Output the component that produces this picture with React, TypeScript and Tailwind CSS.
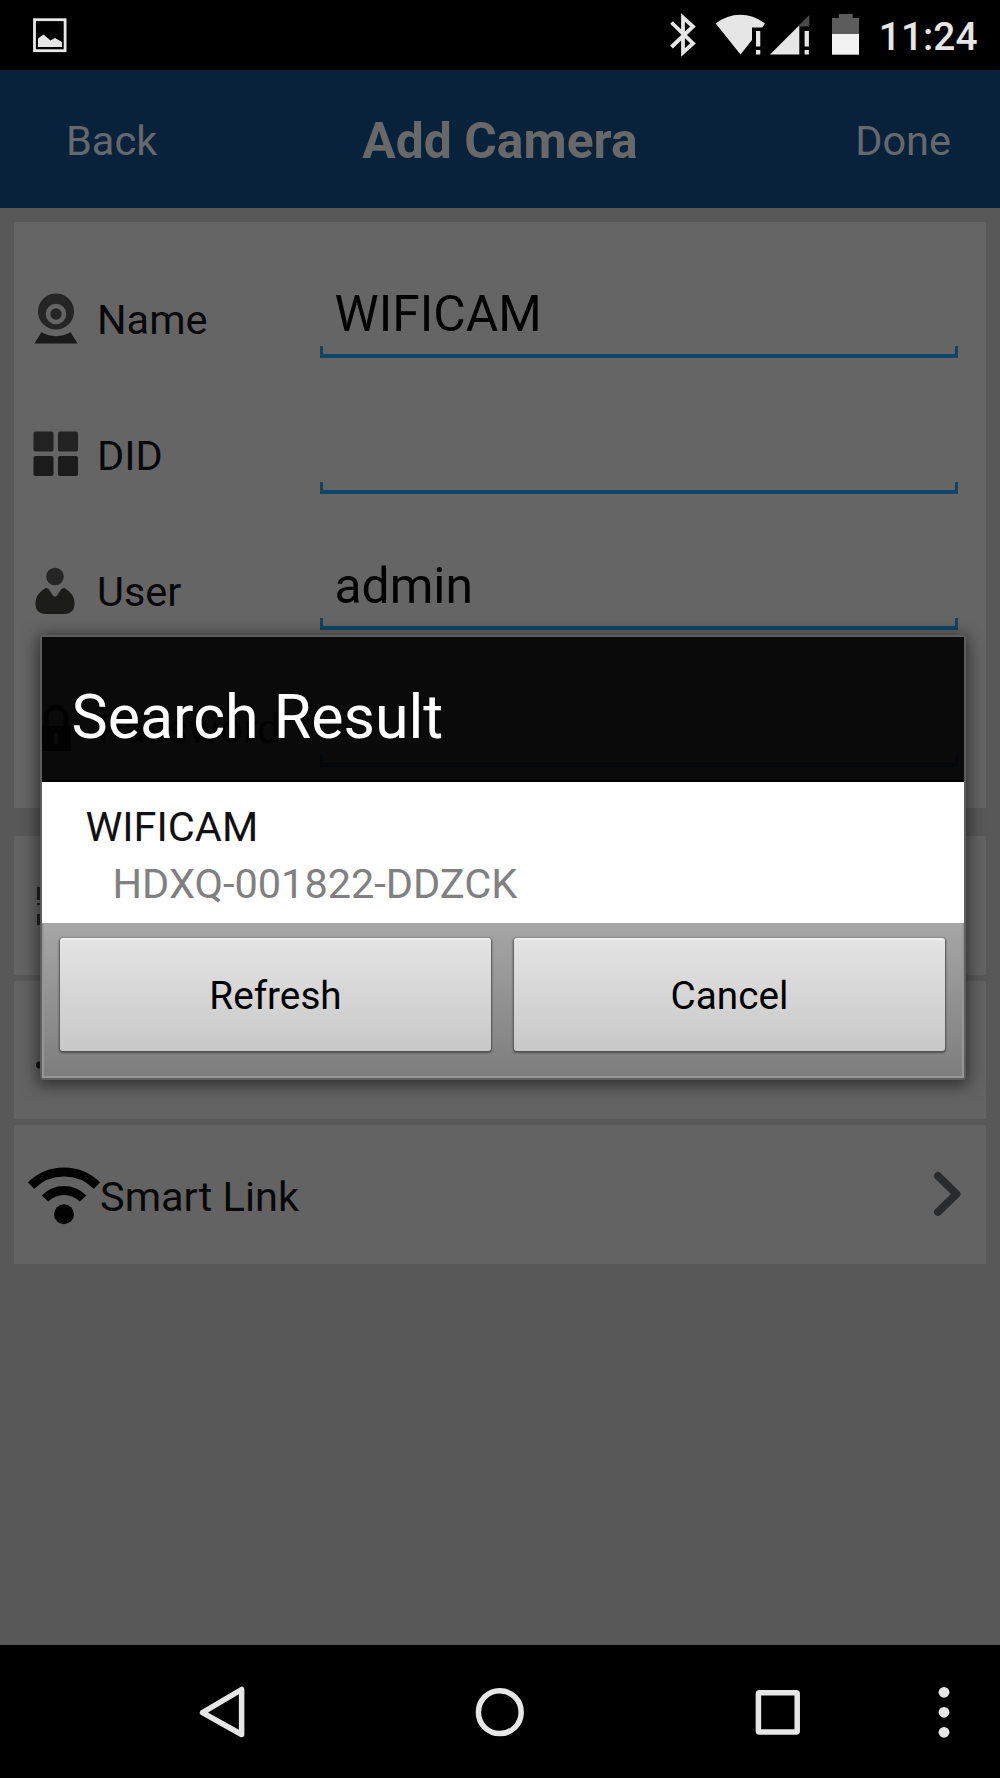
import type { ReactNode } from "react";

function StatusBar() {
  return (
    <div className="flex h-[69.500px] items-start justify-between bg-black">
      <svg className="mt-[18px] ml-[33px]" width="34" height="35" viewBox="0 0 34 35">
        <rect x="1.5" y="1.7" width="30.6" height="31" fill="none" stroke="#e8e8e8" strokeWidth="2.8" />
        <path d="M5 29V20.5L10.5 16.5L17.5 22.5L22 20L29 24V29Z" fill="#e6e6e6" />
      </svg>
      <div className="flex">
        <svg width="190" height="69" viewBox="669 0 190 69" fill="#e6e6e6">
          <path d="M671.5 22.5L693 43.5L683 52.5V17.5L693 26.5L671.5 47" fill="none" stroke="#e6e6e6" strokeWidth="3.8" />
          <path d="M715.7 23.5Q727 14.8 740.3 14.8T765 23.5L762.3 27.5H752V40L740.5 54.5Z" />
          <path d="M756 31h4.3v15.5h-4.3zM756 50h4.3v4.5h-4.3zM804.6 31h4.3v15.5h-4.3zM804.6 50h4.3v4.5h-4.3z" />
          <path d="M770 54.5L799.3 25.3V54.5Z" />
          <path d="M809.3 15V26.5H799V25.3Z" fill="#4a4a4a" />
          <path d="M832 34V18H839V14H852.7V18H859V34Z" fill="#5c5c5c" />
          <path d="M832 34H859V54.7H832Z" fill="#f2f2f2" />
        </svg>
        <div className="mr-[22.500px] ml-[20px] h-[73px] text-[38.900px] leading-[73px] font-medium text-[#e6e6e6]">11:24</div>
      </div>
    </div>
  );
}

function CameraIcon() {
  return (
    <svg width="46" height="52" viewBox="0 0 46 52">
      <circle cx="23" cy="18.500" r="18" fill="#252525" />
      <circle cx="23" cy="21" r="8" fill="#252525" stroke="#646464" strokeWidth="4.6" />
      <path d="M8.500 39.300Q23 47 37.500 39.300L44.500 50.500H1.500Z" fill="#191919" />
    </svg>
  );
}

function GridIcon() {
  return (
    <svg className="mb-[2px]" width="46" height="46" viewBox="0 0 46 46" fill="#1b1b1b">
      <rect x="0.500" y="0.500" width="20" height="20" rx="2" fill="#222" />
      <rect x="25" y="0.500" width="20" height="20" rx="2" fill="#222" />
      <rect x="0.500" y="25" width="20" height="20" rx="2" />
      <rect x="25" y="25" width="20" height="20" rx="2" />
    </svg>
  );
}

function UserIcon() {
  return (
    <svg className="mb-px" width="46" height="48" viewBox="0 0 46 48">
      <circle cx="22" cy="9.500" r="8.800" fill="#252525" />
      <path d="M12.500 21Q14.500 20.500 16 22.500L19.500 28Q22 31.500 24.500 28L28 22.500Q29.500 20.500 31.500 21Q41.500 27 41.500 36Q42 46.500 31 47H13Q2 46.500 2.500 36Q2.500 27 12.500 21Z" fill="#1c1c1b" />
    </svg>
  );
}

function LockIcon() {
  return (
    <svg width="46" height="48" viewBox="0 0 46 48">
      <path d="M13 23V13a10 10 0 0 1 20 0V23" fill="none" stroke="#1c1c1c" strokeWidth="5" />
      <path d="M8 22H38V47H8ZM21 29V40H25V29Z" fill="#1c1c1c" fillRule="evenodd" />
    </svg>
  );
}

function Field({ icon, label, value }: { icon: ReactNode; label: string; value?: string }) {
  return (
    <div className="flex h-[136.200px]">
      <div className="flex w-[83px] items-center pl-[19px]">{icon}</div>
      <div className="flex w-[222.500px] items-center pt-[2px] text-[41.500px] text-[#080808]">{label}</div>
      <div className="flex w-[638.500px] flex-col">
        <div className="h-[95px] pt-[27px] pl-[15px] text-[49.800px] leading-[73px] text-[#020202]">{value}</div>
        <div className="h-[12px] border-x-[3px] border-b-[4px] border-[#0f4567]" />
      </div>
    </div>
  );
}

function DialogButton({ children }: { children: ReactNode }) {
  return (
    <button className="h-[113px] w-[431px] rounded-[3px] border-t-2 border-[#eeeeee] bg-linear-to-b from-[#e4e4e4] to-[#c8c8c8] pt-px text-[38.700px] text-black shadow-[0_1px_2px_1px_#505050]">
      {children}
    </button>
  );
}

function SearchDialog() {
  return (
    <div className="absolute top-[635px] left-[40px] w-[926px] rounded-[4px] border-[2px] border-[#5d5d5d] shadow-[0_3px_16px_3px_rgba(0,0,0,0.500)]">
      <div className="flex h-[145px] items-center border-b-2 border-black bg-black/90 pt-[18px] pl-[29.500px] text-[60.900px] text-white">
        Search Result
      </div>
      <div className="h-[141px] bg-white pt-[16px] text-[41.500px] leading-[57px]">
        <div className="pl-[43.500px] text-[#111]">WIFICAM</div>
        <div className="pl-[70.500px] text-[#808080]">HDXQ-001822-DDZCK</div>
      </div>
      <div className="flex h-[154.500px] gap-[23px] border-x-2 border-b-2 border-[#979797] bg-linear-to-b from-[#a6a6a6] to-[#7e7e7e] pt-[15px] pl-[16px]">
        <DialogButton>Refresh</DialogButton>
        <DialogButton>Cancel</DialogButton>
      </div>
    </div>
  );
}

function NavBar() {
  return (
    <div className="h-[133.500px] bg-black">
      <svg width="1000" height="134" viewBox="0 1644 1000 134" fill="none" stroke="#e6e6e6" strokeWidth="5.500" strokeLinejoin="round">
        <path d="M241.600 1688.500V1733.500L202.500 1711.700Z" />
        <circle cx="499.800" cy="1711.200" r="21.400" />
        <rect x="758.400" y="1691.800" width="38.800" height="39.200" rx="1" />
        <g fill="#e6e6e6" stroke="none">
          <circle cx="944" cy="1691.300" r="5.400" />
          <circle cx="944" cy="1711.300" r="5.400" />
          <circle cx="944" cy="1731.300" r="5.400" />
        </g>
      </svg>
    </div>
  );
}

export default function App() {
  return (
    <div className="relative flex h-[1778px] w-[1000px] flex-col overflow-hidden bg-[#585858] font-['Roboto',sans-serif]">
      <StatusBar />
      <header className="grid h-[138.500px] grid-cols-3 items-center bg-[#09223b] pt-[5px] text-[41.500px] text-[#66696c]">
        <span className="pl-[66px]">Back</span>
        <span className="text-center text-[49.800px] font-bold whitespace-nowrap text-[#686868]">Add Camera</span>
        <span className="pr-[49px] text-right">Done</span>
      </header>
      <main className="flex flex-1 flex-col px-[14px] pt-[14px]">
        <section className="h-[586px] bg-[#656565] pt-[29px]">
          <Field icon={<CameraIcon />} label="Name" value="WIFICAM" />
          <Field icon={<GridIcon />} label="DID" />
          <Field icon={<UserIcon />} label="User" value="admin" />
          <Field icon={<LockIcon />} label="Password" />
        </section>
        <section className="mt-[28px] flex flex-col gap-[6px]">
          <div className="flex h-[138.700px] items-center bg-[#636363] pl-[22px]">
            <svg className="mt-[2px]" width="42" height="40" viewBox="0 0 42 40" fill="#222">
              <path d="M1 1H5V14H1zM1 17H5V19H1zM1 28H5V39H1z" />
            </svg>
          </div>
          <div className="flex h-[138.700px] items-center bg-[#636363] pl-[21px]">
            <svg className="mt-[30px]" width="46" height="30" viewBox="0 0 46 30" fill="#111">
              <circle cx="4.500" cy="15" r="3.500" />
            </svg>
          </div>
          <div className="flex h-[138.700px] items-center justify-between bg-[#636363] pr-[24px] pl-[14px]">
            <div className="flex items-center">
              <svg width="72" height="60" viewBox="0 0 72 60" fill="none" stroke="#030303" strokeWidth="9">
                <path d="M3 20.500A46.800 46.800 0 0 1 69 20.500" />
                <path d="M17 33.500A26.300 26.300 0 0 1 55 33.500" />
                <circle cx="36" cy="49.300" r="10" fill="#030303" stroke="none" />
              </svg>
              <span className="pt-[5px] text-[41.500px] text-[#080808]">Smart Link</span>
            </div>
            <svg width="30" height="48" viewBox="0 0 30 48" fill="none" stroke="#292b2d" strokeWidth="8" strokeLinecap="round" strokeLinejoin="round">
              <path d="M6 5L24.500 23L6 41" />
            </svg>
          </div>
        </section>
      </main>
      <NavBar />
      <SearchDialog />
    </div>
  );
}
